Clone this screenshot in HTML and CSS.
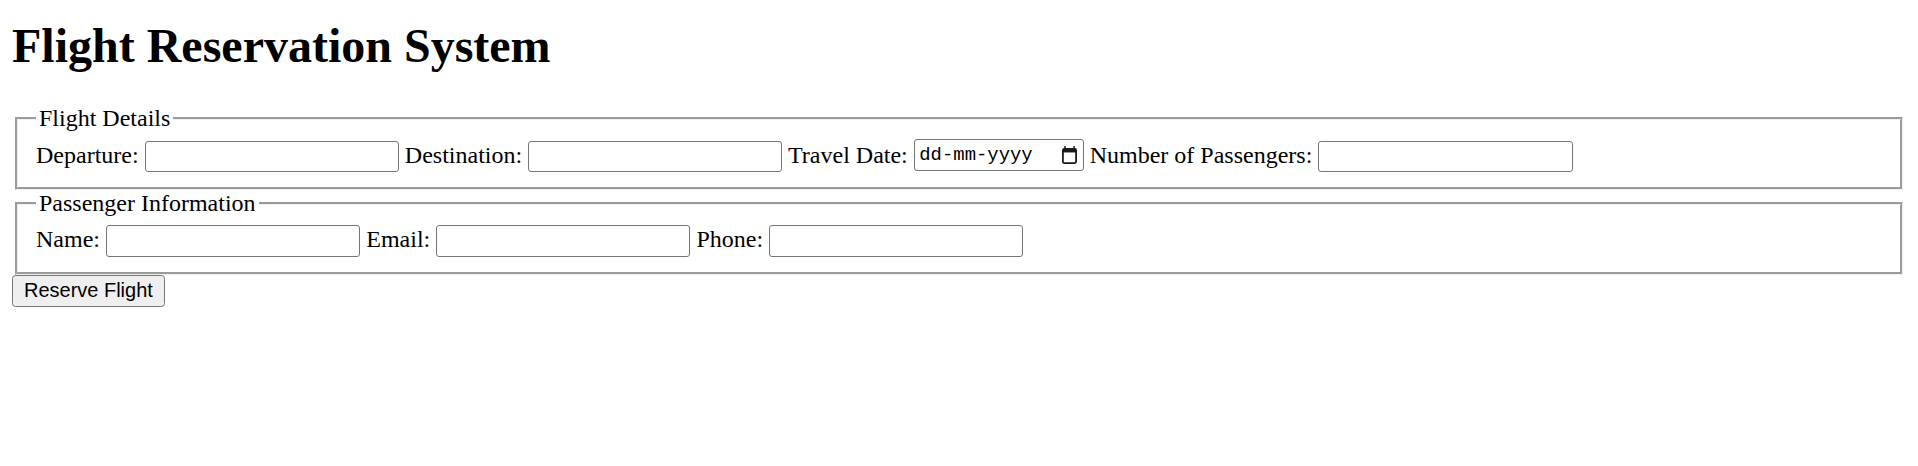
FILE: index.html
```html
<!DOCTYPE html>
<html class="page">
<head>
<meta charset="utf-8">
<title>Flight Reservation System</title>
<link rel="stylesheet" href="styles.css">
</head>
<body class="body">
<h1 class="title">Flight Reservation System</h1>
<form class="form">
  <fieldset class="group">
    <legend class="legend">Flight Details</legend>
    <label class="label">Departure:</label> <input type="text" class="field">
    <label class="label">Destination:</label> <input type="text" class="field">
    <label class="label">Travel Date:</label> <span class="date"><input type="text" class="date-input" placeholder="dd-mm-yyyy"><svg class="cal" width="10" height="12" viewBox="0 0 10 12"><rect x="1.5" y="0" width="1" height="2.5" fill="#1a1a1a"/><rect x="7.5" y="0" width="1" height="2.5" fill="#1a1a1a"/><rect x="0.6" y="1.9" width="8.8" height="9.5" rx="1" fill="none" stroke="#1a1a1a" stroke-width="1.2"/><rect x="0.6" y="1.9" width="8.8" height="2.4" fill="#1a1a1a"/></svg></span>
    <label class="label">Number of Passengers:</label> <input type="text" class="field">
  </fieldset>
  <fieldset class="group">
    <legend class="legend">Passenger Information</legend>
    <label class="label">Name:</label> <input type="text" class="field">
    <label class="label">Email:</label> <input type="text" class="field">
    <label class="label">Phone:</label> <input type="text" class="field">
  </fieldset>
  <button type="submit" class="btn">Reserve Flight</button>
</form>
</body>
</html>
```
FILE: styles.css
```css
.page {
  zoom: 1.5;
}
.body {
  margin: 8px;
  font-family: "Liberation Serif", "Times New Roman", serif;
  font-size: 16px;
  color: #000;
  background: #fff;
}
.title {
  font-size: 32px;
  font-weight: bold;
  margin: 4px 0 21.44px;
}
.form {
  margin: 0;
}
.field {
  box-sizing: border-box;
  width: 169.5px;
  height: 21px;
  font-family: "Liberation Sans", Arial, sans-serif;
  font-size: 13.333px;
  padding: 1px 2px;
  border: 1px solid #767676;
  border-radius: 2px;
  background: #fff;
}
.date {
  box-sizing: border-box;
  display: inline-flex;
  align-items: center;
  justify-content: space-between;
  width: 113.3px;
  height: 21px;
  padding: 0 4px 0 3px;
  border: 1px solid #767676;
  border-radius: 2px;
  background: #fff;
  vertical-align: bottom;
  position: relative;
  top: -1px;
}
.date-input {
  width: 80px;
  border: 0;
  padding: 0;
  margin: 0;
  outline: none;
  background: transparent;
  font-family: "Liberation Mono", monospace;
  font-size: 12.6px;
  color: #000;
}
.date-input::placeholder {
  color: #000;
  opacity: 1;
}
.cal {
  display: block;
  flex: none;
}
.btn {
  font-family: "Liberation Sans", Arial, sans-serif;
  font-size: 13.333px;
}
```
